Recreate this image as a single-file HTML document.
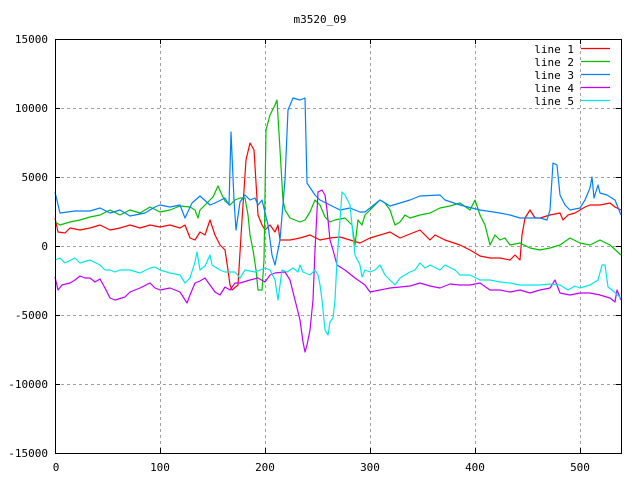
<!DOCTYPE html>
<html><head><style>
body{margin:0;background:#fff;width:640px;height:480px;overflow:hidden}
svg text{font-family:"DejaVu Sans Mono","Liberation Mono",monospace;font-size:11px;fill:#000}
</style></head><body>
<svg width="640" height="480" viewBox="0 0 640 480" xmlns="http://www.w3.org/2000/svg">
<g stroke="#a0a0a0" stroke-width="1" stroke-dasharray="3,3" fill="none" shape-rendering="crispEdges">
<path d="M160.5 39V453M265.5 39V453M370.5 39V453M475.5 39V453M580.5 39V453"/>
<path d="M55 108.5H621M55 177.5H621M55 246.5H621M55 315.5H621M55 384.5H621"/>
</g>
<g stroke="#000" stroke-width="1" fill="none" shape-rendering="crispEdges">
<path d="M55 39.5h5M55 108.5h5M55 177.5h5M55 246.5h5M55 315.5h5M55 384.5h5M55 453.5h5"/>
<path d="M621 39.5h-5M621 108.5h-5M621 177.5h-5M621 246.5h-5M621 315.5h-5M621 384.5h-5M621 453.5h-5"/>
<path d="M160.5 453v-5M265.5 453v-5M370.5 453v-5M475.5 453v-5M580.5 453v-5"/>
<path d="M160.5 39v5M265.5 39v5M370.5 39v5M475.5 39v5M580.5 39v5"/>
</g>
<g fill="none" stroke-width="1.2" stroke-linejoin="round">
<polyline stroke="#ff0000" points="55,218 58,232 65,233 70,228 80,230 90,228 100,225 110,230 120,228 130,225 140,228 150,225 160,227 170,225 180,228 185,225 190,238 195,240 200,232 205,235 210,220 215,235 220,245 225,250 228,270 230,285 232,290 238,285 242,220 246,160 250,143 254,150 258,215 262,225 265,230 270,225 275,232 278,225 280,240 290,240 300,238 310,235 320,240 330,238 340,237 350,240 360,243 370,238 380,235 390,232 400,238 410,234 420,230 430,240 435,235 445,240 460,245 470,250 480,256 490,258 500,258 510,260 515,255 520,260 522,235 525,218 530,210 535,218 540,218 550,215 560,213 563,220 568,215 575,213 580,210 585,207 590,205 600,205 610,203 615,207 621,210"/>
<polyline stroke="#00c000" points="55,222 60,225 70,222 80,220 90,217 100,215 110,210 120,215 130,210 140,213 150,207 160,212 170,210 180,206 190,207 195,210 198,218 200,210 205,205 210,200 213,197 218,186 222,195 225,201 230,205 235,200 240,198 245,198 248,215 250,235 253,250 256,270 258,290 262,290 264,260 266,130 270,115 275,105 277,100 280,150 283,200 285,210 290,218 300,222 305,220 310,212 315,200 320,205 325,217 330,222 335,220 345,218 352,225 355,245 358,220 362,225 365,215 370,210 375,205 380,200 385,203 390,210 395,225 400,222 405,215 410,218 420,215 430,213 440,208 450,206 460,203 470,210 475,200 480,215 485,225 490,245 495,235 500,240 505,238 510,245 520,243 530,248 540,250 550,248 560,245 570,238 580,243 590,245 600,240 610,245 621,255"/>
<polyline stroke="#0080ff" points="55,192 60,213 75,211 90,211 100,208 110,213 120,210 130,216 145,213 155,207 160,205 170,207 180,205 185,218 192,203 200,196 210,205 215,203 225,198 229,205 231,132 234,200 236,230 240,202 245,195 250,200 255,198 258,205 262,200 268,225 272,255 275,265 280,240 285,180 288,110 293,98 300,100 305,98 307,183 315,195 320,200 330,205 340,210 350,208 360,212 365,212 370,208 380,200 390,206 400,203 410,200 420,196 440,195 445,200 460,205 480,210 500,213 510,215 520,218 540,218 547,220 550,210 553,163 557,165 560,195 565,205 570,210 580,208 585,200 590,188 592,177 594,198 598,185 600,193 607,195 615,200 621,215"/>
<polyline stroke="#c000ff" points="55,277 58,290 62,285 70,283 75,280 80,276 85,278 90,278 95,282 100,279 105,288 110,298 115,300 125,297 130,292 140,288 150,283 155,288 160,290 170,288 180,292 187,303 190,295 195,283 200,281 205,278 210,285 215,292 220,295 225,287 230,290 235,283 240,283 250,280 258,278 265,282 270,275 275,273 285,272 290,280 295,300 300,320 303,342 305,352 307,345 310,330 313,300 315,250 318,192 322,190 325,195 327,210 330,240 333,250 337,265 345,270 355,278 365,285 370,292 380,290 390,288 400,287 410,286 420,283 430,286 440,288 450,284 460,285 470,285 480,283 490,290 500,290 510,292 520,290 530,293 540,290 550,288 555,280 560,293 570,295 580,293 590,293 600,295 610,298 615,302 617,290 621,300"/>
<polyline stroke="#00e8e8" points="55,260 60,258 65,263 75,258 80,263 90,260 100,265 105,270 110,270 115,272 120,270 130,270 140,273 150,268 155,267 160,270 170,273 180,275 185,283 190,278 195,262 197,252 200,270 205,266 210,255 212,265 220,270 225,272 235,272 240,278 245,270 255,272 265,268 270,270 275,280 278,300 282,270 287,272 293,268 298,272 300,265 303,272 310,275 315,270 318,275 320,285 322,300 325,330 328,335 330,322 333,318 335,300 337,260 340,220 342,192 345,195 350,205 353,235 355,255 360,265 362,277 365,270 370,272 375,270 380,265 385,275 390,280 395,285 400,278 405,275 410,272 415,270 420,263 425,268 430,265 440,270 445,265 455,270 460,275 470,275 480,280 490,280 500,282 510,283 520,285 530,285 540,285 550,284 560,285 568,290 575,286 580,288 590,285 598,280 602,265 605,265 608,287 612,290 621,298"/>
</g>
<rect x="55.5" y="39.5" width="566" height="414" fill="none" stroke="#000" stroke-width="1"/>
<text x="320" y="23" text-anchor="middle">m3520_09</text>
<g text-anchor="end">
<text x="48" y="43">15000</text>
<text x="48" y="112">10000</text>
<text x="48" y="181">5000</text>
<text x="48" y="250">0</text>
<text x="48" y="319">-5000</text>
<text x="48" y="388">-10000</text>
<text x="48" y="457">-15000</text>
</g>
<g text-anchor="middle">
<text x="56" y="471">0</text>
<text x="160" y="471">100</text>
<text x="265" y="471">200</text>
<text x="370" y="471">300</text>
<text x="475" y="471">400</text>
<text x="580" y="471">500</text>
</g>
<g text-anchor="end">
<text x="574" y="53">line 1</text>
<text x="574" y="66">line 2</text>
<text x="574" y="79">line 3</text>
<text x="574" y="92">line 4</text>
<text x="574" y="105">line 5</text>
</g>
<g stroke-width="1.2">
<path d="M581 48.5h29" stroke="#ff0000"/>
<path d="M581 61.5h29" stroke="#00c000"/>
<path d="M581 74.5h29" stroke="#0080ff"/>
<path d="M581 87.5h29" stroke="#c000ff"/>
<path d="M581 100.5h29" stroke="#00e8e8"/>
</g>
</svg>
</body></html>
